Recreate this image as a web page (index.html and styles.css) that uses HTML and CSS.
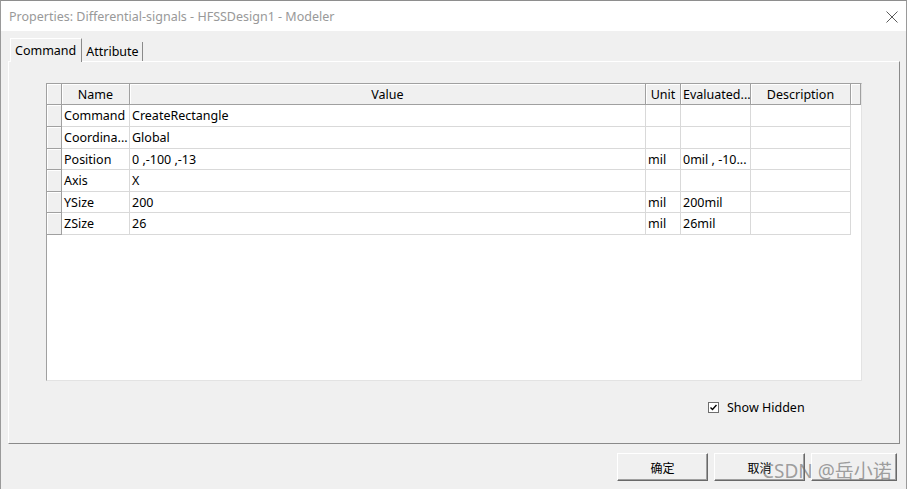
FILE: index.html
```
<!DOCTYPE html>
<html lang="en">
  <head>
    <meta charset="UTF-8" />
    <title>Properties: Differential-signals - HFSSDesign1 - Modeler</title>
    <link rel="stylesheet" href="styles.css">
  </head>
  <body>
    <div class="window">
      <div class="titlebar">
        <span class="title">Properties: Differential-signals - HFSSDesign1 - Modeler</span>
        <svg class="close" width="12" height="12" viewBox="0 0 12 12">
          <path d="M0.5 0.5 L11.5 11.5 M11.5 0.5 L0.5 11.5" stroke="#5a5a5a" stroke-width="1" fill="none" />
        </svg>
      </div>
      <div class="content">
        <div class="tabs">
          <div class="tab active">Command</div>
          <div class="tab">Attribute</div>
        </div>
        <div class="panel">
          <div class="grid">
            <div class="hd"></div>
            <div class="hd">Name</div>
            <div class="hd">Value</div>
            <div class="hd">Unit</div>
            <div class="hd left">Evaluated...</div>
            <div class="hd">Description</div>
            <div class="hd"></div>

            <div class="rh"></div>
            <div class="cell">Command</div>
            <div class="cell">CreateRectangle</div>
            <div class="cell"></div>
            <div class="cell"></div>
            <div class="cell"></div>
            <div class="blank"></div>

            <div class="rh"></div>
            <div class="cell">Coordina...</div>
            <div class="cell">Global</div>
            <div class="cell"></div>
            <div class="cell"></div>
            <div class="cell"></div>
            <div class="blank"></div>

            <div class="rh"></div>
            <div class="cell">Position</div>
            <div class="cell">0 ,-100 ,-13</div>
            <div class="cell">mil</div>
            <div class="cell">0mil , -10...</div>
            <div class="cell"></div>
            <div class="blank"></div>

            <div class="rh"></div>
            <div class="cell">Axis</div>
            <div class="cell">X</div>
            <div class="cell"></div>
            <div class="cell"></div>
            <div class="cell"></div>
            <div class="blank"></div>

            <div class="rh"></div>
            <div class="cell">YSize</div>
            <div class="cell">200</div>
            <div class="cell">mil</div>
            <div class="cell">200mil</div>
            <div class="cell"></div>
            <div class="blank"></div>

            <div class="rh"></div>
            <div class="cell">ZSize</div>
            <div class="cell">26</div>
            <div class="cell">mil</div>
            <div class="cell">26mil</div>
            <div class="cell"></div>
            <div class="blank"></div>
          </div>
          <label class="check">
            <span class="box">
              <svg width="7" height="7" viewBox="0 0 7 7">
                <path d="M0.5 3.5 L2.5 5.5 L6.5 1" stroke="#000" stroke-width="1.4" fill="none" />
              </svg>
            </span>
            Show Hidden
          </label>
        </div>
        <div class="buttons">
          <button class="btn">确定</button>
          <button class="btn">取消</button>
          <button class="btn narrow"></button>
        </div>
      </div>
      <div class="watermark">CSDN @岳小诺</div>
    </div>
  </body>
</html>
```
FILE: styles.css
```
body {
  margin: 0;
  font-family: "Noto Sans", "Noto Sans CJK SC", sans-serif;
  font-size: 12.5px;
  color: #000;
  background: #f0f0f0;
}
.window {
  position: relative;
  width: 907px;
  height: 489px;
  box-sizing: border-box;
  border-top: 1px solid #8e8e8e;
  border-left: 1px solid #9a9a9a;
  border-right: 1px solid #9a9a9a;
  background: #f0f0f0;
  overflow: hidden;
}
.titlebar {
  height: 30px;
  background: #fff;
  display: flex;
  align-items: center;
  justify-content: space-between;
  padding: 0 8px;
}
.title {
  color: #999;
  font-size: 12.5px;
}
.close {
  display: block;
  margin-top: 1px;
}
.content {
  padding-top: 7px;
}
.tabs {
  display: flex;
  height: 23px;
  padding-left: 9px;
}
.tab {
  padding: 0 3px 0 4px;
  line-height: 20px;
  margin-top: 4px;
  border-right: 1px solid #8a8a8a;
}
.tab.active {
  margin-top: 0;
  line-height: 24px;
  padding: 0 5px 0 4px;
  border-left: 1px solid #fff;
  border-top: 1px solid #fff;
  margin-bottom: -1px;
  background: #f0f0f0;
  position: relative;
  z-index: 1;
}
.panel {
  margin-left: 7px;
  width: 892px;
  height: 383px;
  box-sizing: border-box;
  border-top: 1px solid #fff;
  border-left: 1px solid #fff;
  border-right: 1px solid #8a8a8a;
  border-bottom: 1px solid #8a8a8a;
  padding: 21px 0 0 37px;
}
.grid {
  width: 816px;
  height: 298px;
  box-sizing: border-box;
  border-top: 1px solid #a0a0a0;
  border-left: 1px solid #a0a0a0;
  border-right: 1px solid #e3e3e3;
  border-bottom: 1px solid #e3e3e3;
  background: #fff;
  display: grid;
  grid-template-columns: 15px 68px 516px 35px 70px 100px 10px;
  grid-template-rows: 21px 22px 22px 21px 22px 21px 22px;
  align-content: start;
}
.grid > div {
  box-sizing: border-box;
  white-space: nowrap;
  overflow: hidden;
}
.hd {
  background: #f0f0f0;
  border-right: 1px solid #a0a0a0;
  border-bottom: 1px solid #a0a0a0;
  box-shadow: inset 1px 1px 0 #fff;
  text-align: center;
  line-height: 20px;
  padding-top: 1px;
}
.hd.left {
  text-align: left;
  padding-left: 2px;
}
.rh {
  background: #f0f0f0;
  border-right: 1px solid #a0a0a0;
  border-bottom: 1px solid #a0a0a0;
  box-shadow: inset 1px 1px 0 #fff;
}
.cell {
  border-right: 1px solid #d9d9d9;
  border-bottom: 1px solid #d9d9d9;
  padding: 1px 0 0 2px;
  line-height: 20px;
}
.check {
  display: flex;
  align-items: center;
  margin: 20px 0 0 662px;
  height: 12px;
}
.box {
  width: 11px;
  height: 11px;
  box-sizing: border-box;
  border: 1px solid #6e6e6e;
  background: #fff;
  display: flex;
  align-items: center;
  justify-content: center;
  margin-right: 8px;
}
.box svg {
  display: block;
}
.buttons {
  display: flex;
  justify-content: flex-end;
  gap: 6px;
  padding: 9px 9px 0 0;
}
.btn {
  width: 91px;
  height: 28px;
  background: #f0f0f0;
  border: 0;
  border-top: 1px solid #fff;
  border-left: 1px solid #fff;
  border-right: 1px solid #696969;
  border-bottom: 1px solid #696969;
  box-shadow: inset -1px -1px 0 #a0a0a0;
  font-family: "Noto Sans CJK SC", sans-serif;
  font-size: 12px;
  color: #000;
  padding: 0;
}
.btn.narrow {
  width: 86px;
}
.watermark {
  position: absolute;
  left: 761px;
  top: 455px;
  font-family: "Noto Sans", "Noto Sans CJK SC", sans-serif;
  font-size: 19px;
  color: rgba(110, 110, 110, 0.65);
  white-space: nowrap;
}
```
